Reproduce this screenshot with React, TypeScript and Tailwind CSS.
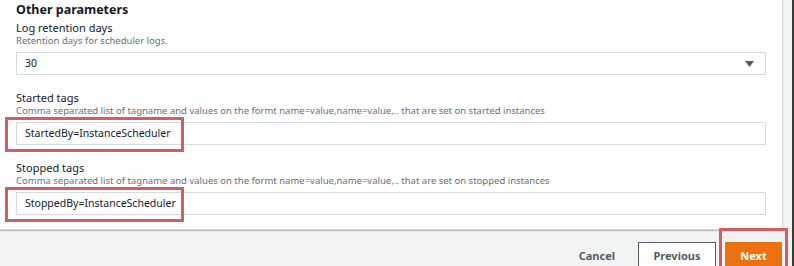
import React from "react";

const font = { fontFamily: '"Noto Sans", "Liberation Sans", sans-serif' };

function Field({
  label,
  hint,
  value,
  select,
  marked,
}: {
  label: string;
  hint: string;
  value: string;
  select?: boolean;
  marked?: boolean;
}) {
  return (
    <div className="flex flex-col">
      <div className="h-[14px] text-[11px] leading-[14px] text-[#16191f]">{label}</div>
      <div className="h-[12px] text-[9.5px] leading-[12px] text-[#687078]">{hint}</div>
      <div className="relative mt-[5px] mr-[16px] flex h-[23px] items-center justify-between border border-[#d5dbdb] bg-white pl-[8px] pr-[11px]">
        <span className="text-[10.5px] text-[#16191f]">{value}</span>
        {select && (
          <svg width="9" height="6" viewBox="0 0 9 6">
            <path d="M0 0h9L4.5 6z" fill="#545b64" />
          </svg>
        )}
        {marked && (
          <div className="absolute left-[-12px] top-[-6px] h-[35px] w-[179px] border-[3px] border-[#cf5f64]" />
        )}
      </div>
    </div>
  );
}

export default function App() {
  return (
    <div className="flex h-[266px] w-[794px] overflow-hidden bg-[#f2f3f3]" style={font}>
      <div className="flex w-[792px] flex-col">
        {/* panel */}
        <div className="w-[783px] border-r border-b border-[#d5dbdb] bg-white pl-[16px] pt-[2px] pb-[14px] shadow-[0_1px_1px_rgba(0,28,36,0.25)]">
          <div className="h-[16px] text-[12.5px] font-bold leading-[16px] text-[#16191f]">Other parameters</div>
          <div className="mt-[3px] flex flex-col gap-[16px]">
            <Field
              label="Log retention days"
              hint="Retention days for scheduler logs."
              value="30"
              select
            />
            <Field
              label="Started tags"
              hint="Comma separated list of tagname and values on the formt name=value,name=value,.. that are set on started instances"
              value="StartedBy=InstanceScheduler"
              marked
            />
            <Field
              label="Stopped tags"
              hint="Comma separated list of tagname and values on the formt name=value,name=value,.. that are set on stopped instances"
              value="StoppedBy=InstanceScheduler"
              marked
            />
          </div>
        </div>

        {/* actions */}
        <div className="mt-[12px] flex w-[783px] items-start justify-end gap-[9px] pr-[1px]">
          <button className="h-[28px] px-[14px] text-[11px] font-bold text-[#545b64]">Cancel</button>
          <button className="h-[28px] w-[78px] border border-[#545b64] bg-white text-[11px] font-bold text-[#545b64]">
            Previous
          </button>
          <div className="relative">
            <button className="h-[28px] w-[57px] bg-[#ec7211] text-[11px] font-bold text-white">Next</button>
            <div className="absolute left-[-6px] top-[-14px] h-[50px] w-[69px] border-[3px] border-[#cf5f64]" />
          </div>
        </div>
      </div>
      <div className="w-[2px] bg-[#3a3a3a]" />
    </div>
  );
}
